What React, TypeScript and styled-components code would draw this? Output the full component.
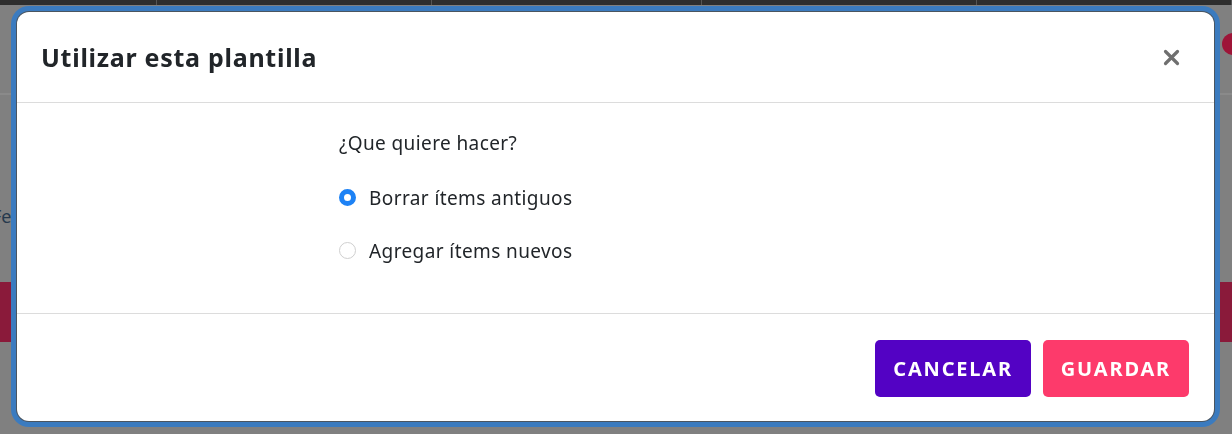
import React from "react";
import styled, { createGlobalStyle } from "styled-components";

const Global = createGlobalStyle`
  html, body { margin: 0; padding: 0; }
  body {
    width: 1232px;
    height: 434px;
    overflow: hidden;
    background: #808080;
    font-family: "Noto Sans", "Open Sans", sans-serif;
  }
`;

const Page = styled.div`
  width: 1232px;
  height: 434px;
  display: flex;
  flex-direction: column;
  background: #808080;
`;

const TopStrip = styled.div`
  height: 5px;
  background: #2e2e2e;
  display: flex;
`;

const TopCell = styled.div<{ $w: number }>`
  width: ${(p) => p.$w}px;
  border-right: 1px solid #555;
`;

const PageHeader = styled.div`
  height: 88px;
  border-bottom: 2px solid #8a8a8a;
  display: flex;
  align-items: center;
  justify-content: flex-end;
`;

const Avatar = styled.div`
  width: 22px;
  height: 22px;
  border-radius: 50%;
  background: #9e1538;
  margin-right: -12px;
  margin-top: -10px;
`;

const PageBody = styled.div`
  height: 187px;
  display: flex;
  align-items: center;
  padding-top: 5px;
  box-sizing: border-box;
`;

const FadedText = styled.span`
  font-size: 18px;
  color: #26394d;
  margin-left: -8px;
  margin-top: 50px;
`;

const Band = styled.div`
  height: 60px;
  background: #8a1a3a;
`;

const Overlay = styled.div`
  position: fixed;
  inset: 0;
`;

const Dialog = styled.div`
  position: absolute;
  left: 17px;
  top: 12px;
  width: 1197px;
  height: 409px;
  background: #fff;
  border-radius: 12px;
  box-shadow: 0 0 0 1px #4a5560, 0 0 0 6px #3b7bbf;
  display: flex;
  flex-direction: column;
  color: #212529;
`;

const Header = styled.div`
  height: 90px;
  border-bottom: 1px solid #dcdcdc;
  display: flex;
  align-items: center;
  justify-content: space-between;
  padding: 0 31px 0 24px;
`;

const Title = styled.h2`
  margin: 0;
  font-size: 25px;
  font-weight: 700;
  color: #212529;
  letter-spacing: 0.72px;
`;

const Close = styled.button`
  border: none;
  background: none;
  padding: 0;
  width: 24px;
  height: 24px;
  display: flex;
  align-items: center;
  justify-content: center;
  cursor: pointer;
`;

const Body = styled.div`
  height: 211px;
  border-bottom: 1px solid #dcdcdc;
  padding: 25px 0 0 322px;
  box-sizing: border-box;
  display: flex;
  flex-direction: column;
`;

const Question = styled.p`
  margin: 0 0 13px 0;
  font-size: 19px;
  line-height: 30px;
  letter-spacing: 0.4px;
`;

const Option = styled.label`
  display: flex;
  align-items: center;
  gap: 13px;
  height: 53px;
  font-size: 19px;
  letter-spacing: 0.4px;
  cursor: pointer;
`;

const Radio = styled.span<{ $checked: boolean }>`
  width: 17px;
  height: 17px;
  border-radius: 50%;
  box-sizing: border-box;
  background: #fff;
  border: ${(p) => (p.$checked ? "5px solid #1d82f5" : "1px solid #cfcfcf")};
`;

const Footer = styled.div`
  flex: 1;
  display: flex;
  justify-content: flex-end;
  align-items: flex-start;
  gap: 12px;
  padding: 26px 25px 0 0;
`;

const Button = styled.button<{ $variant: "primary" | "accent" }>`
  height: 57px;
  padding: 0 18px;
  border: none;
  border-radius: 5px;
  background: ${(p) => (p.$variant === "primary" ? "#5302c4" : "#fd3a6b")};
  color: #fff;
  font-family: inherit;
  font-size: 20px;
  font-weight: 700;
  letter-spacing: 1.8px;
  cursor: pointer;
`;

export default function App() {
  const [choice, setChoice] = React.useState("borrar");
  return (
    <>
      <Global />
      <Page>
        <TopStrip>
          <TopCell $w={157} />
          <TopCell $w={275} />
          <TopCell $w={270} />
          <TopCell $w={275} />
          <TopCell $w={255} />
        </TopStrip>
        <PageHeader>
          <Avatar />
        </PageHeader>
        <PageBody>
          <FadedText>Fe</FadedText>
        </PageBody>
        <Band />
      </Page>
      <Overlay>
        <Dialog role="dialog">
          <Header>
            <Title>Utilizar esta plantilla</Title>
            <Close aria-label="Cerrar">
              <svg width="17" height="17" viewBox="0 0 17 17">
                <path d="M2.5 2.5 L14.5 14.5 M14.5 2.5 L2.5 14.5" stroke="#6f6f6f" strokeWidth="3.2" strokeLinecap="round" />
              </svg>
            </Close>
          </Header>
          <Body>
            <Question>¿Que quiere hacer?</Question>
            <Option onClick={() => setChoice("borrar")}>
              <Radio $checked={choice === "borrar"} />
              Borrar ítems antiguos
            </Option>
            <Option onClick={() => setChoice("agregar")}>
              <Radio $checked={choice === "agregar"} />
              Agregar ítems nuevos
            </Option>
          </Body>
          <Footer>
            <Button $variant="primary">CANCELAR</Button>
            <Button $variant="accent">GUARDAR</Button>
          </Footer>
        </Dialog>
      </Overlay>
    </>
  );
}
